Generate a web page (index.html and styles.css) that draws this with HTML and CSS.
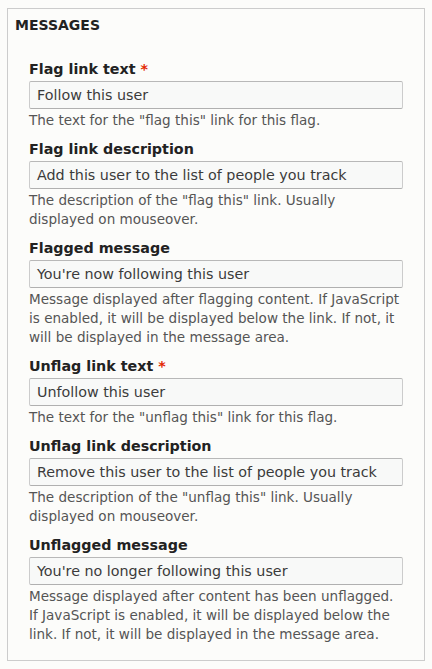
FILE: index.html
```html
<!DOCTYPE html>
<html>
<head>
<meta charset="utf-8">
<link rel="stylesheet" href="styles.css">
</head>
<body>
<fieldset class="box">
  <div class="box-title">MESSAGES</div>
  <div class="box-body">
    <div class="item">
      <label class="label">Flag link text <span class="req">*</span></label>
      <div class="input">Follow this user</div>
      <div class="desc">The text for the "flag this" link for this flag.</div>
    </div>
    <div class="item">
      <label class="label">Flag link description</label>
      <div class="input">Add this user to the list of people you track</div>
      <div class="desc">The description of the "flag this" link. Usually displayed on mouseover.</div>
    </div>
    <div class="item">
      <label class="label">Flagged message</label>
      <div class="input">You're now following this user</div>
      <div class="desc">Message displayed after flagging content. If JavaScript is enabled, it will be displayed below the link. If not, it will be displayed in the message area.</div>
    </div>
    <div class="item">
      <label class="label">Unflag link text <span class="req">*</span></label>
      <div class="input">Unfollow this user</div>
      <div class="desc">The text for the "unflag this" link for this flag.</div>
    </div>
    <div class="item">
      <label class="label">Unflag link description</label>
      <div class="input">Remove this user to the list of people you track</div>
      <div class="desc">The description of the "unflag this" link. Usually displayed on mouseover.</div>
    </div>
    <div class="item">
      <label class="label">Unflagged message</label>
      <div class="input">You're no longer following this user</div>
      <div class="desc">Message displayed after content has been unflagged. If JavaScript is enabled, it will be displayed below the link. If not, it will be displayed in the message area.</div>
    </div>
  </div>
</fieldset>
</body>
</html>
```
FILE: styles.css
```css
html, body {
  margin: 0;
  padding: 0;
  background: #fcfcfa;
}
body {
  font-family: "DejaVu Sans", sans-serif;
  color: #222;
}
.box {
  margin: 8px 7px;
  padding: 7px 0 6px 0;
  border: 1px solid #ccc;
  min-width: 0;
}
.box-title {
  font-size: 14px;
  font-weight: bold;
  line-height: 19px;
  padding-left: 7px;
  color: #222;
}
.box-body {
  padding: 25px 21px 0 21px;
}
.item {
  display: flex;
  flex-direction: column;
  margin-bottom: 10px;
}
.label {
  display: block;
  font-size: 14.3px;
  font-weight: bold;
  line-height: 19px;
  color: #222;
  margin-bottom: 2px;
}
.req {
  color: #e32700;
}
.input {
  box-sizing: border-box;
  height: 28px;
  border: 1px solid #ccc;
  border-top-color: #b8b8b8;
  border-bottom-color: #b0b0b0;
  border-radius: 2px;
  background: #f8f9f8;
  font-size: 14.3px;
  line-height: 26px;
  padding: 0 7px;
  color: #3b3b3b;
  white-space: nowrap;
  overflow: hidden;
}
.desc {
  font-size: 13.55px;
  line-height: 19px;
  color: #555;
  margin-top: 2px;
}
```
